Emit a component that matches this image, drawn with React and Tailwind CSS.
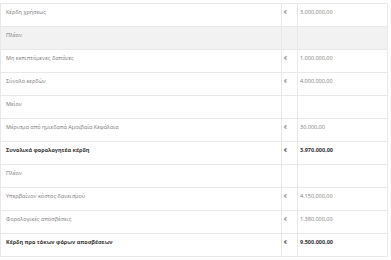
import React from "react";

const rows = [
  { label: "Κέρδη χρήσεως", amount: "3.000.000,00" },
  { label: "Πλέον", grey: true },
  { label: "Μη εκπιπτόμενες δαπάνες", amount: "1.000.000,00" },
  { label: "Σύνολο κερδών", amount: "4.000.000,00" },
  { label: "Μείον" },
  { label: "Μέρισμα από ημιεδαπά Αμοιβαία Κεφάλαια", amount: "30.000,00" },
  { label: "Συνολικά φορολογητέα κέρδη", amount: "3.970.000,00", bold: true },
  { label: "Πλέον" },
  { label: "Υπερβαίνον κόστος δανεισμού", amount: "4.150.000,00" },
  { label: "Φορολογικές αποσβέσεις", amount: "1.380.000,00" },
  { label: "Κέρδη προ τόκων φόρων αποσβέσεων", amount: "9.500.000,00", bold: true },
];

export default function App() {
  return (
    <div className="w-[391px] h-[260px] bg-white pt-[3px] pl-[0px]" style={{ fontFamily: '"Open Sans", sans-serif' }}>
      <table className="w-[387px] border-collapse table-fixed text-[5.5px] leading-[8px]">
        <colgroup>
          <col className="w-[281px]" />
          <col className="w-[16px]" />
          <col className="w-[90px]" />
        </colgroup>
        <tbody>
          {rows.map((r, i) => {
            const txt = r.bold ? "font-bold text-[#333333]" : "text-[#7a7a7a]";
            const bg = r.grey ? "bg-[#f2f2f2]" : "bg-white";
            return (
              <tr key={i} className={`${bg} h-[23px]`}>
                <td className={`border border-[#e9e9e9] align-top pl-[5px] pt-[4px] ${txt}`}>{r.label}</td>
                <td className={`border border-[#e9e9e9] align-top pl-[2px] pt-[4px] ${r.bold ? "text-[#333333]" : "text-[#7a7a7a]"}`}>{r.amount ? "€" : ""}</td>
                <td className={`border border-[#e9e9e9] align-top pl-[2px] pt-[4px] ${txt}`}>{r.amount || ""}</td>
              </tr>
            );
          })}
        </tbody>
      </table>
    </div>
  );
}
